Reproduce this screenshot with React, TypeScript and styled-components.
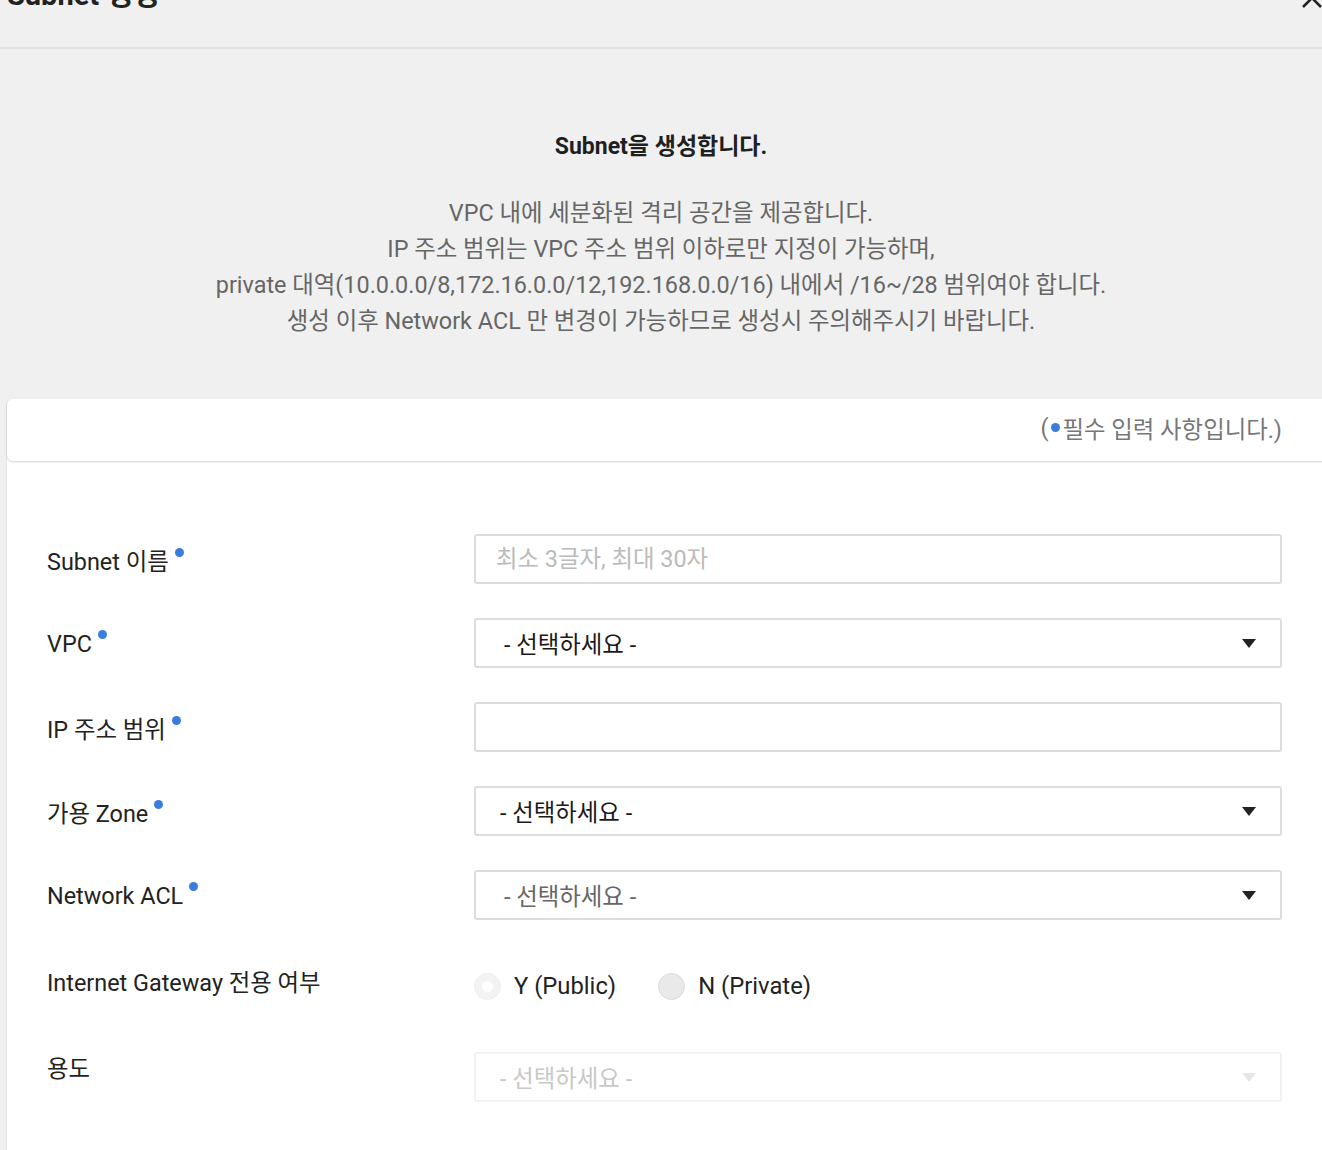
import styled, { createGlobalStyle } from 'styled-components';

const GlobalStyle = createGlobalStyle`
  html, body {
    margin: 0;
    padding: 0;
    overflow: hidden;
    background-color: #f0f0f0;
  }
  * {
    box-sizing: border-box;
  }
  body {
    font-family: Roboto, 'Noto Sans CJK KR', sans-serif;
    color: #222;
  }
`;

const Modal = styled.div`
  width: 1329px;
  height: 1150px;
  background-color: #f0f0f0;
`;

const Header = styled.header`
  height: 49px;
  display: flex;
  justify-content: space-between;
  align-items: flex-start;
  border-bottom: 2px solid #e3e3e3;
  padding: 0 0 0 7px;
`;

const ModalTitle = styled.h2`
  margin: -22px 0 0;
  font-size: 29px;
  line-height: 34px;
  font-weight: 700;
  color: #222;
`;

const CloseButton = styled.button`
  margin: -14px 0 0;
  padding: 0 5px 0 0;
  width: 40px;
  height: 28px;
  border: none;
  background: none;
  display: flex;
  justify-content: flex-end;
`;

const Intro = styled.section`
  height: 350px;
  display: flex;
  flex-direction: column;
  align-items: center;
  padding-top: 83px;
  padding-right: 7px;
`;

const IntroTitle = styled.h3`
  margin: 0 0 33px;
  font-size: 23px;
  line-height: 30px;
  font-weight: 700;
  color: #1f1f1f;
`;

const IntroText = styled.p`
  margin: 0;
  text-align: center;
  font-size: 23.4px;
  line-height: 36px;
  color: #666;
`;

const Card = styled.div`
  margin: 0 0 0 6px;
  background-color: #fff;
  border-radius: 6px 6px 0 0;
  height: 760px;
  border-left: 1px solid #e4e4e4;
`;

const CardHeader = styled.div`
  height: 62px;
  display: flex;
  align-items: center;
  justify-content: flex-end;
  padding: 0 47px 5px 0;
  border-radius: 6px;
  background: #fff;
  box-shadow: 0 1px 2px rgba(0, 0, 0, 0.18);
  font-size: 23.4px;
  color: #777;
`;

const RequiredDot = styled.span<{ $inline?: boolean }>`
  display: inline-block;
  width: 9px;
  height: 9px;
  border-radius: 50%;
  background-color: #3b7ddd;
  margin: ${(p) => (p.$inline ? '0 2px 0 3px' : '0 0 0 6px')};
  vertical-align: ${(p) => (p.$inline ? '9px' : '13px')};
`;

const Form = styled.div`
  padding: 73px 40px 0 40px;
  display: flex;
  flex-direction: column;
  gap: 34px;
`;

const Row = styled.div<{ $height?: number }>`
  display: grid;
  grid-template-columns: 427px 808px;
  height: ${(p) => p.$height ?? 50}px;
  align-items: center;
`;

const Label = styled.label<{ $shift?: number }>`
  font-size: 23.4px;
  color: #222;
  position: relative;
  top: ${(p) => p.$shift ?? 1}px;
`;

const TextInput = styled.input`
  width: 100%;
  height: 50px;
  border: 2px solid #ddd;
  border-radius: 3px;
  padding: 0 20px;
  font-family: Roboto, 'Noto Sans CJK KR', sans-serif;
  font-size: 23.4px;
  color: #222;
  outline: none;
  &::placeholder {
    color: #bbb;
  }
`;

const SelectBox = styled.div<{ $tone: 'dark' | 'muted' | 'disabled'; $pad: number }>`
  height: 50px;
  border: 2px solid ${(p) => (p.$tone === 'disabled' ? '#f2f2f2' : '#ddd')};
  border-radius: 3px;
  display: flex;
  align-items: center;
  justify-content: space-between;
  padding: 0 24px 0 ${(p) => p.$pad}px;
  font-size: 23.4px;
  color: ${(p) =>
    p.$tone === 'dark' ? '#1a1a1a' : p.$tone === 'muted' ? '#666' : '#c8c8c8'};
`;

const Caret = styled.span<{ $disabled?: boolean }>`
  width: 0;
  height: 0;
  border-left: 7px solid transparent;
  border-right: 7px solid transparent;
  border-top: 9px solid ${(p) => (p.$disabled ? '#e6e6e6' : '#222')};
`;

const RadioGroup = styled.div`
  display: flex;
  align-items: center;
  gap: 42px;
`;

const RadioOption = styled.label`
  display: flex;
  align-items: center;
  gap: 13px;
  font-size: 23.8px;
  color: #222;
`;

const RadioCircle = styled.span<{ $checked?: boolean }>`
  width: 27px;
  height: 27px;
  border-radius: 50%;
  border: 1px solid ${(p) => (p.$checked ? '#eee' : '#dcdcdc')};
  background-color: ${(p) => (p.$checked ? '#f3f3f3' : '#e9e9e9')};
  display: flex;
  align-items: center;
  justify-content: center;
  &::after {
    content: '';
    width: 11px;
    height: 11px;
    border-radius: 50%;
    background: ${(p) => (p.$checked ? '#fff' : 'transparent')};
  }
`;

function App() {
  return (
    <>
      <GlobalStyle />
      <Modal>
        <Header>
          <ModalTitle>Subnet 생성</ModalTitle>
          <CloseButton aria-label="닫기">
            <svg width="24" height="24" viewBox="0 0 24 24">
              <path d="M3 3 L21 21 M21 3 L3 21" stroke="#222" strokeWidth="2.6" />
            </svg>
          </CloseButton>
        </Header>
        <Intro>
          <IntroTitle>Subnet을 생성합니다.</IntroTitle>
          <IntroText>
            VPC 내에 세분화된 격리 공간을 제공합니다.
            <br />
            IP 주소 범위는 VPC 주소 범위 이하로만 지정이 가능하며,
            <br />
            private 대역(10.0.0.0/8,172.16.0.0/12,192.168.0.0/16) 내에서 /16~/28 범위여야 합니다.
            <br />
            생성 이후 Network ACL 만 변경이 가능하므로 생성시 주의해주시기 바랍니다.
          </IntroText>
        </Intro>
        <Card>
          <CardHeader>
            (<RequiredDot $inline />필수 입력 사항입니다.)
          </CardHeader>
          <Form>
            <Row>
              <Label>
                Subnet 이름<RequiredDot />
              </Label>
              <TextInput placeholder="최소 3글자, 최대 30자" />
            </Row>
            <Row>
              <Label>
                VPC<RequiredDot />
              </Label>
              <SelectBox $tone="dark" $pad={28}>
                - 선택하세요 -<Caret />
              </SelectBox>
            </Row>
            <Row>
              <Label>
                IP 주소 범위<RequiredDot />
              </Label>
              <TextInput />
            </Row>
            <Row>
              <Label>
                가용 Zone<RequiredDot />
              </Label>
              <SelectBox $tone="dark" $pad={24}>
                - 선택하세요 -<Caret />
              </SelectBox>
            </Row>
            <Row>
              <Label>
                Network ACL<RequiredDot />
              </Label>
              <SelectBox $tone="muted" $pad={28}>
                - 선택하세요 -<Caret />
              </SelectBox>
            </Row>
            <Row $height={64}>
              <Label $shift={-5}>Internet Gateway 전용 여부</Label>
              <RadioGroup>
                <RadioOption>
                  <RadioCircle $checked />Y (Public)
                </RadioOption>
                <RadioOption>
                  <RadioCircle />N (Private)
                </RadioOption>
              </RadioGroup>
            </Row>
            <Row>
              <Label $shift={-10}>용도</Label>
              <SelectBox $tone="disabled" $pad={24}>
                - 선택하세요 -<Caret $disabled />
              </SelectBox>
            </Row>
          </Form>
        </Card>
      </Modal>
    </>
  );
}

export default App;
